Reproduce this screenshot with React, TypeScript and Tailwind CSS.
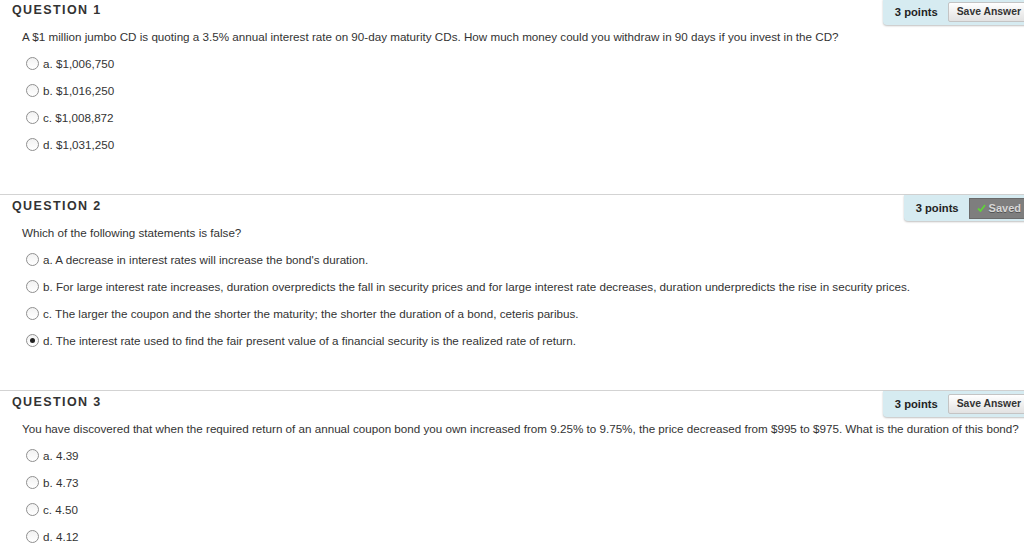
import React from "react";

type Q = {
  n: number;
  text: string;
  options: string[];
  selected?: number;
  saved?: boolean;
};

const questions: Q[] = [
  {
    n: 1,
    text: "A $1 million jumbo CD is quoting a 3.5% annual interest rate on 90-day maturity CDs. How much money could you withdraw in 90 days if you invest in the CD?",
    options: ["a. $1,006,750", "b. $1,016,250", "c. $1,008,872", "d. $1,031,250"],
  },
  {
    n: 2,
    text: "Which of the following statements is false?",
    options: [
      "a. A decrease in interest rates will increase the bond's duration.",
      "b. For large interest rate increases, duration overpredicts the fall in security prices and for large interest rate decreases, duration underpredicts the rise in security prices.",
      "c. The larger the coupon and the shorter the maturity; the shorter the duration of a bond, ceteris paribus.",
      "d. The interest rate used to find the fair present value of a financial security is the realized rate of return.",
    ],
    selected: 3,
    saved: true,
  },
  {
    n: 3,
    text: "You have discovered that when the required return of an annual coupon bond you own increased from 9.25% to 9.75%, the price decreased from $995 to $975. What is the duration of this bond?",
    options: ["a. 4.39", "b. 4.73", "c. 4.50", "d. 4.12"],
  },
];

function Radio({ checked }: { checked?: boolean }) {
  return (
    <span className="relative inline-block w-[13px] h-[13px] rounded-full border border-[#8f8f8f] bg-gradient-to-b from-[#f2f2f2] to-white shrink-0">
      {checked && (
        <span className="absolute left-[3px] top-[3px] w-[5px] h-[5px] rounded-full bg-[#222]" />
      )}
    </span>
  );
}

function PointsBox({ saved }: { saved?: boolean }) {
  return (
    <div className="flex items-center h-[26px] bg-[#d6ebf1] rounded-bl-[4px] shadow-[0_1px_2px_rgba(0,0,0,0.25)] pl-[12px] pr-[4px] gap-[10px]">
      <span className="font-bold text-[11.2px] text-[#222]">3 points</span>
      {saved ? (
        <span className="flex items-center h-[21px] pl-[7px] pr-[8px] gap-[3px] bg-[#7e7e7e] border border-[#6a6a6a] text-[11px] font-bold text-[#d6d6d6] [text-shadow:0_1px_0_#555]">
          <svg width="9" height="8" viewBox="0 0 9 8">
            <path d="M1 4.5 L3.5 7 L8 1" stroke="#5fd33a" strokeWidth="1.8" fill="none" />
          </svg>
          Saved
        </span>
      ) : (
        <span className="flex items-center h-[20px] px-[8px] bg-gradient-to-b from-white to-[#e2e2e2] border border-[#c4c4c4] rounded-[2px] text-[10.4px] font-bold text-[#333]">
          Save Answer
        </span>
      )}
    </div>
  );
}

function Section({ q }: { q: Q }) {
  return (
    <div className="border-t border-[#d3d3d3] h-[196px]">
      <div className="flex justify-between items-start h-[26px]">
        <div className="pl-[12px] h-[22px] leading-[22px] text-[12.5px] font-bold tracking-[1.4px] text-[#333]">
          QUESTION {q.n}
        </div>
        <PointsBox saved={q.saved} />
      </div>
      <div className="mt-[3px] pl-[22px] leading-[18px] text-[11.65px] text-[#333] whitespace-nowrap">
        {q.text}
      </div>
      <div className="mt-[4px] pl-[26px]">
        {q.options.map((o, i) => (
          <div key={i} className="flex items-center h-[27px] gap-[4px] text-[11.65px] text-[#333] whitespace-nowrap">
            <Radio checked={q.selected === i} />
            <span>{o}</span>
          </div>
        ))}
      </div>
    </div>
  );
}

export default function App() {
  return (
    <div className="w-[1024px] h-[555px] overflow-hidden bg-white" style={{ fontFamily: '"Liberation Sans", Arial, sans-serif' }}>
      <div className="w-[1034px] -mt-[2px]">
        {questions.map((q) => (
          <Section key={q.n} q={q} />
        ))}
      </div>
    </div>
  );
}
